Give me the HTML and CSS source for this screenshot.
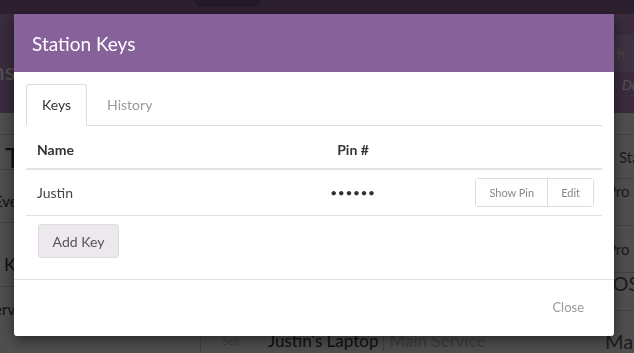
FILE: index.html
```html
<!DOCTYPE html>
<html lang="en">
<head>
    <meta charset="UTF-8">
    <meta name="viewport" content="width=device-width, initial-scale=1.0">
    <title>Station Keys</title>
    <link rel="stylesheet" href="styles.css">
</head>
<body>

    <!-- Page behind the dialog -->
    <div class="topnav">
        <div class="nav-pill"></div>
    </div>

    <div class="page-head">
        <h1 class="page-title">Stations</h1>
        <div class="head-tools">
            <div class="search">Search</div>
            <div class="head-note">Default</div>
        </div>
    </div>

    <div class="page-body">
        <div class="sidebar">
            <div class="side-item side-gap"></div>
            <div class="side-item side-big">Tools</div>
            <div class="side-item side-small">Events</div>
            <div class="side-item side-mid">Kiosks</div>
            <div class="side-item side-serv">Services</div>
        </div>
        <div class="main">
            <div class="main-row main-gap"></div>
            <div class="main-row main-head"><span class="cell-right">Status</span></div>
            <div class="main-row row-top"><span class="cell-right cell-pro">Pro</span></div>
            <div class="main-row"><span class="cell-right cell-pro">Pro</span></div>
            <div class="main-row row-os"><span class="cell-right cell-os">iOS</span></div>
            <div class="main-row station-row">
                <span class="station-type">Self</span>
                <span class="station-name">Justin's Laptop</span>
                <span class="station-service">Main Service</span>
                <span class="cell-right cell-mac">Mac</span>
            </div>
        </div>
    </div>

    <div class="backdrop"></div>

    <!-- Station Keys dialog -->
    <div class="modal">
        <div class="modal-header">
            <h4 class="modal-title">Station Keys</h4>
        </div>

        <div class="modal-body">
            <div class="tabs">
                <a class="tab active" href="#">Keys</a>
                <a class="tab" href="#">History</a>
            </div>

            <div class="tab-content">
                <div class="keys-table">
                    <div class="keys-row keys-head">
                        <div class="col-name">Name</div>
                        <div class="col-pin">Pin #</div>
                        <div class="col-actions"></div>
                    </div>
                    <div class="keys-row">
                        <div class="col-name">Justin</div>
                        <div class="col-pin pin-dots">••••••</div>
                        <div class="col-actions">
                            <div class="btn-group">
                                <button class="btn-small">Show Pin</button>
                                <button class="btn-small">Edit</button>
                            </div>
                        </div>
                    </div>
                </div>
                <button class="add-key">Add Key</button>
            </div>
        </div>

        <div class="modal-footer">
            <button class="close-btn">Close</button>
        </div>
    </div>

</body>
</html>
```

FILE: styles.css
```css
body {
    font-family: Lato, "Open Sans", sans-serif;
    margin: 0;
    padding: 0;
    background-color: #f2f2f2;
    color: #333;
    overflow: hidden;
    height: 353px;
}

/* background page */
.topnav {
    height: 14px;
    background-color: #8a6390;
    padding-left: 193px;
    overflow: hidden;
}
.nav-pill {
    width: 69px;
    height: 20px;
    margin-top: -13px;
    border-radius: 10px;
    background-color: #6f4e79;
}
.page-head {
    height: 99px;
    background-color: #b385bd;
    display: flex;
    justify-content: space-between;
    overflow: hidden;
}
.page-title {
    margin: 42px 0 0 -70px;
    font-size: 24px;
    font-weight: 400;
    color: #fff;
}
.head-tools {
    width: 80px;
    margin-right: -30px;
    padding-top: 21px;
}
.search {
    height: 37px;
    line-height: 37px;
    background-color: #c29cc9;
    color: #e6d8e8;
    font-size: 14px;
}
.head-note {
    margin-top: 4px;
    padding-left: 38px;
    font-size: 14px;
    font-style: italic;
    color: #fff;
}
.page-body {
    display: flex;
}
.sidebar {
    width: 187px;
    flex-shrink: 0;
}
.side-item {
    border-bottom: 1px solid #c8c8c8;
    overflow: hidden;
    white-space: nowrap;
}
.side-gap {
    height: 21px;
}
.side-big {
    height: 34px;
    line-height: 46px;
    font-size: 26px;
    padding-left: 5px;
}
.side-small {
    height: 52px;
    line-height: 62px;
    font-size: 15px;
    margin-left: -6px;
}
.side-mid {
    height: 63px;
    line-height: 82px;
    font-size: 18px;
    padding-left: 4px;
}
.side-serv {
    height: 60px;
    line-height: 44px;
    font-size: 15px;
    margin-left: -14px;
    border-bottom: none;
}
.main {
    flex: 1;
    border-left: 1px solid #c8c8c8;
    margin-left: 13px;
}
.main-row {
    height: 46px;
    border-bottom: 1px solid #c8c8c8;
    display: flex;
    align-items: center;
    font-size: 15px;
    overflow: hidden;
}
.main-gap {
    height: 21px;
}
.main-head {
    height: 43px;
}
.row-top {
    align-items: flex-start;
    height: 43px;
    padding-top: 3px;
    line-height: 18px;
}
.row-os {
    align-items: flex-start;
    height: 37px;
    line-height: 20px;
}
.cell-right {
    margin-left: auto;
    width: 15px;
    white-space: nowrap;
    color: #555;
}
.cell-pro {
    width: 27px;
}
.cell-os {
    width: 26px;
    font-size: 20px;
}
.cell-mac {
    width: 29px;
    font-size: 20px;
}
.station-row {
    height: 40px;
    align-items: flex-end;
    line-height: 20px;
    border-bottom: none;
}
.station-type {
    padding-left: 21px;
    width: 46px;
    font-size: 11px;
    color: #bbb;
}
.station-name {
    font-size: 17px;
    color: #333;
    padding-right: 5px;
    border-right: 1px solid #bbb;
}
.station-service {
    font-size: 17px;
    color: #bbb;
    padding-left: 5px;
}

.backdrop {
    position: fixed;
    top: 0;
    left: 0;
    right: 0;
    bottom: 0;
    background-color: rgba(0, 0, 0, 0.68);
}

/* dialog */
.modal {
    position: fixed;
    top: 14px;
    left: 14px;
    width: 600px;
    background: white;
    border-radius: 3px;
    box-shadow: 0 4px 14px rgba(0, 0, 0, 0.5);
    overflow: hidden;
}
.modal-header {
    height: 58px;
    background-color: #87619a;
    padding: 0 18px;
    display: flex;
    align-items: center;
}
.modal-title {
    margin: 0;
    font-size: 19px;
    font-weight: 400;
    color: white;
}
.modal-body {
    padding: 12px 12px 21px 12px;
}
.tabs {
    display: flex;
    border-bottom: 1px solid #ddd;
}
.tab {
    padding: 10px 15px;
    line-height: 20px;
    font-size: 14px;
    color: #999;
    text-decoration: none;
    border: 1px solid transparent;
    border-radius: 3px 3px 0 0;
    margin-right: 4px;
    margin-bottom: -1px;
}
.tab.active {
    color: #333;
    border-color: #ddd;
    border-bottom-color: white;
}
.tab-content {
    padding-top: 6px;
}
.keys-row {
    display: grid;
    grid-template-columns: 280px 94px 1fr;
    align-items: center;
    border-bottom: 1px solid #e3e3e3;
    font-size: 14px;
    color: #444;
}
.keys-row > div {
    padding: 8px 8px 8px 11px;
    line-height: 20px;
}
.keys-head {
    font-weight: bold;
    color: #333;
    border-bottom: 2px solid #e3e3e3;
}
.keys-row .col-pin {
    text-align: center;
    padding: 8px 0;
}
.pin-dots {
    font-size: 12px;
    letter-spacing: 0.6px;
    color: #333;
}
.col-actions {
    display: flex;
    justify-content: flex-end;
}
.btn-group {
    display: flex;
    border: 1px solid #ddd;
    border-radius: 3px;
}
.btn-small {
    font-family: Lato, sans-serif;
    font-size: 11px;
    color: #888;
    background: white;
    border: none;
    padding: 0 13px;
    height: 27px;
}
.btn-small + .btn-small {
    border-left: 1px solid #ddd;
}
.add-key {
    font-family: Lato, sans-serif;
    margin: 8px 0 0 12px;
    height: 34px;
    width: 81px;
    font-size: 14px;
    color: #555;
    background-color: #ece8ee;
    border: 1px solid #ddd;
    border-radius: 3px;
}
.modal-footer {
    border-top: 1px solid #e3e3e3;
    height: 56px;
    display: flex;
    justify-content: flex-end;
    align-items: center;
    padding: 0 15px;
}
.close-btn {
    font-family: Lato, sans-serif;
    font-size: 13px;
    color: #999;
    background: none;
    border: none;
    padding: 4px 15px 6px 15px;
}
```
